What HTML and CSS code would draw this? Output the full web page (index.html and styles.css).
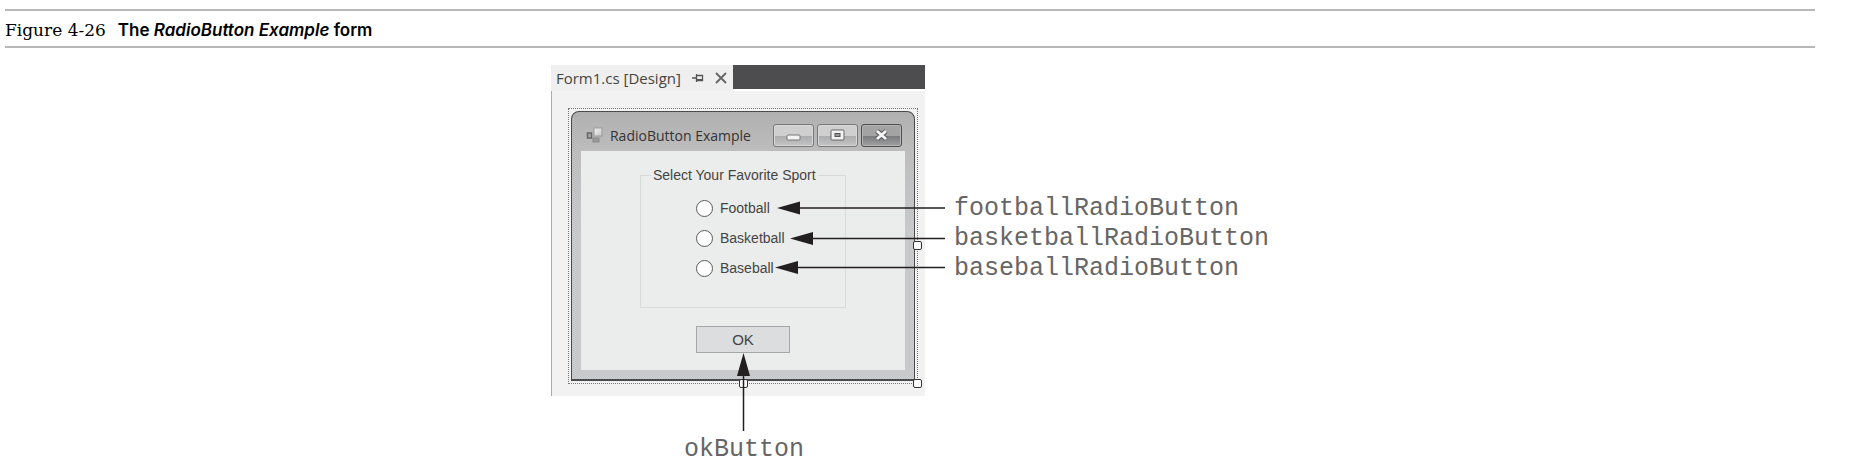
FILE: index.html
```
<!DOCTYPE html>
<html lang="en">
<head>
<meta charset="utf-8">
<title>Figure 4-26 The RadioButton Example form</title>
<link rel="stylesheet" href="styles.css">
</head>
<body>
<figure class="figure">
  <figcaption class="caption">
    <span class="caption-number">Figure 4-26</span>
    <span class="caption-title">The <em>RadioButton Example</em> form</span>
  </figcaption>
  <div class="diagram">
    <div class="designer">
      <div class="tabs">
        <div class="tab">
          <span>Form1.cs [Design]</span>
          <button class="tab-button" type="button" aria-label="Pin tab">
            <svg width="12" height="12" viewBox="0 0 12 12" fill="none" stroke="#555"><path d="M0 6h4M4.500 2v8M5 3.500h5.500v5H5" stroke-width="1.300"/><path d="M5 8h6" stroke-width="2"/></svg>
          </button>
          <button class="tab-button" type="button" aria-label="Close tab">
            <svg width="12" height="12" viewBox="0 0 12 12" fill="none" stroke="#666" stroke-width="1.900"><path d="M1 1l10 10M11 1L1 11"/></svg>
          </button>
        </div>
        <div class="tab-rest"></div>
      </div>
      <div class="surface">
        <div class="selection">
          <form class="window">
            <div class="titlebar">
              <svg class="app-icon" width="17" height="17" viewBox="0 0 17 17">
                <defs><linearGradient id="tile" x1="0" y1="0" x2="1" y2="1"><stop offset="0" stop-color="#f4f4f4"/><stop offset="1" stop-color="#c4c4c5"/></linearGradient></defs>
                <rect x="1.500" y="6" width="4" height="5" fill="#aaa" stroke="#666" stroke-width="1.500"/>
                <rect x="8" y="1" width="8" height="8" fill="url(#tile)" stroke="#999"/>
                <rect x="7" y="11" width="6" height="4" fill="#999" stroke="#888"/>
              </svg>
              <span class="window-title">RadioButton Example</span>
              <button class="window-button" type="button" aria-label="Minimize">
                <svg width="15" height="13" viewBox="0 0 15 13"><rect x="1" y="6" width="13" height="5" rx="1" fill="#f3f3f3" stroke="#777"/></svg>
              </button>
              <button class="window-button" type="button" aria-label="Maximize">
                <svg width="15" height="13" viewBox="0 0 15 13"><rect x="1" y="1" width="13" height="10" rx="1" fill="#f3f3f3" stroke="#666"/><rect x="5" y="4.500" width="5" height="3" fill="#999" stroke="#555"/></svg>
              </button>
              <button class="window-button window-close" type="button" aria-label="Close">
                <svg width="15" height="13" viewBox="0 0 15 13" fill="none"><path d="M3 2l9 8M12 2L3 10" stroke="#555" stroke-width="5"/><path d="M3 2l9 8M12 2L3 10" stroke="#f5f5f5" stroke-width="3"/></svg>
              </button>
            </div>
            <div class="client">
              <fieldset class="group">
                <legend>Select Your Favorite Sport</legend>
                <label class="option"><input type="radio" name="sport">Football</label>
                <label class="option"><input type="radio" name="sport">Basketball</label>
                <label class="option"><input type="radio" name="sport">Baseball</label>
              </fieldset>
              <button class="ok" type="button">OK</button>
            </div>
          </form>
          <i class="handle handle-right"></i>
          <i class="handle handle-bottom"></i>
          <i class="handle handle-corner"></i>
        </div>
      </div>
    </div>
    <div class="callouts">
      <div>footballRadioButton</div>
      <div>basketballRadioButton</div>
      <div>baseballRadioButton</div>
    </div>
    <div class="callout-ok">okButton</div>
    <svg class="arrows" width="400" height="370" viewBox="0 0 400 370" aria-hidden="true">
      <path d="M245 143H394M258 173.500H394M244 202.500H394M192.500 305V366" stroke="#231f20" stroke-width="1.500"/>
      <path d="M226 143l23-6.500v13zM239 173.500l23-6.500v13zM224 202.500l23-6.500v13zM192.500 288l-6.500 23h13z" fill="#231f20"/>
    </svg>
  </div>
</figure>
</body>
</html>
```
FILE: styles.css
```
body {
  margin: 0;
  background: #fff;
  color: #000;
  font-family: "Open Sans", "Noto Sans", sans-serif;
}
.figure {
  margin: 9px 43px 0 5px;
}
.caption {
  display: flex;
  align-items: baseline;
  gap: 12px;
  height: 35px;
  line-height: 38px;
  border-top: 2px solid #b8b8b8;
  border-bottom: 2px solid #b8b8b8;
}
.caption-number {
  font-family: "DejaVu Serif", serif;
  font-size: 17px;
}
.caption-title {
  font-family: Inter, sans-serif;
  font-size: 17px;
  font-weight: 600;
}
.diagram {
  position: relative;
  display: grid;
  grid-template-columns: max-content max-content;
  justify-content: center;
  column-gap: 29px;
  width: max-content;
  margin: 17px auto 0;
}
.tabs {
  display: flex;
  align-items: flex-start;
}
.tab {
  display: flex;
  align-items: center;
  gap: 11px;
  height: 26px;
  padding: 0 6px 0 5px;
  background: #efefef;
  color: #444;
  font-size: 15px;
}
.tab-button {
  display: flex;
  padding: 0;
  border: 0;
  background: none;
}
.tab-rest {
  flex: 1;
  height: 24px;
  background: #4d4d4f;
}
.surface {
  padding: 17px 7px 12px 16px;
  border-left: 1px solid #aaa;
  background: #f2f2f2;
}
.selection {
  position: relative;
  padding: 2px;
  border: 1px dotted #777;
}
.window {
  border: 1px solid #4b4b4d;
  border-bottom-width: 2px;
  border-radius: 8px 8px 0 0;
  padding: 0 9px 9px 9px;
  background: linear-gradient(#b0b0b1, #bdbdbe 40px, #c8c9cb 120px, #c8c9cb);
}
.titlebar {
  display: flex;
  align-items: center;
  gap: 3px;
  padding: 12px 3px 4px 5px;
}
.window-title {
  flex: 1;
  padding-left: 4px;
  color: #333;
  font-size: 14px;
  line-height: 20px;
}
.window-button {
  display: flex;
  align-items: center;
  justify-content: center;
  width: 41px;
  height: 23px;
  padding: 0;
  border: 1px solid #77787a;
  border-radius: 3px;
  background: linear-gradient(#cfcfd0 50%, #aaabac 50%, #c4c4c5);
  box-shadow: inset 0 0 0 1px #d8d8d9;
}
.window-close {
  border-color: #4f4f51;
  background: linear-gradient(#a3a3a4 50%, #77787a 50%, #a0a0a2);
  box-shadow: inset 0 0 0 1px #b5b5b6;
}
.client {
  display: flex;
  flex-direction: column;
  align-items: center;
  gap: 18px;
  padding: 15px 59px 17px;
  background: #ebedec;
}
.group {
  box-sizing: border-box;
  width: 206px;
  margin: 0;
  padding: 9px 10px 24px;
  border: 1px solid #d8dada;
  color: #444;
  font: 14px "Liberation Sans", Arial, sans-serif;
}
.group legend {
  padding: 0 2px;
  line-height: 18px;
}
.option {
  display: flex;
  align-items: center;
  gap: 7px;
  height: 30px;
  padding-left: 45px;
}
.option input {
  appearance: none;
  box-sizing: border-box;
  width: 17px;
  height: 17px;
  margin: 0;
  border: 1px solid #58595b;
  border-radius: 50%;
  background: #fff;
}
.ok {
  width: 94px;
  height: 27px;
  padding: 0;
  border: 1px solid #a5a6a8;
  background: #dcddde;
  color: #444;
  font: 15px "Liberation Sans", Arial, sans-serif;
}
.handle {
  position: absolute;
  box-sizing: border-box;
  width: 9px;
  height: 9px;
  border: 1px solid #333;
  border-radius: 2px;
  background: #fff;
}
.handle-right {
  top: 48%;
  right: -5px;
}
.handle-bottom {
  bottom: -5px;
  left: 50%;
  margin-left: -4px;
}
.handle-corner {
  right: -5px;
  bottom: -5px;
}
.callouts {
  padding-top: 129px;
}
.callouts,
.callout-ok {
  color: #666;
  font: 25px/30px "Liberation Mono", "Courier New", monospace;
}
.callout-ok {
  padding: 39px 0 0 12px;
  text-align: center;
}
.arrows {
  position: absolute;
  top: 0;
  left: 0;
}
```
